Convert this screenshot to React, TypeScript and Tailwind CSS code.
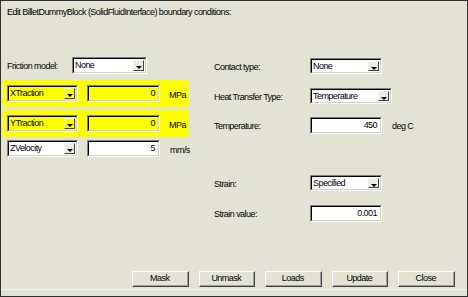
import React from "react";

const font = { fontFamily: '"Liberation Sans", Arial, sans-serif' };

function Arrow() {
  return (
    <div className="w-0 h-0 border-l-[3px] border-r-[3px] border-t-[3px] border-l-transparent border-r-transparent border-t-black mt-[4px]" />
  );
}

function Select({ value, w, yellow }: { value: string; w: string; yellow?: boolean }) {
  return (
    <div
      className={`${w} shrink-0 h-full flex border-t border-l border-t-[#808080] border-l-[#808080] border-b border-r border-b-white border-r-white`}
    >
      <div
        className={`flex-1 flex border-t border-l border-t-black border-l-black border-b border-r border-b-[#d4d0c8] border-r-[#d4d0c8] ${
          yellow ? "bg-[#ffff00]" : "bg-white"
        }`}
      >
        <div className="flex-1 flex items-center pl-[1px] leading-none">{value}</div>
        <div
          className={`w-[11px] my-[1px] mr-[1px] flex items-center justify-center border-t border-l border-t-[#f0f0f0] border-l-[#f0f0f0] border-b border-r border-b-[#404040] border-r-[#404040] ${
            yellow ? "bg-[#ffff00]" : "bg-[#ecebe6]"
          }`}
        >
          <Arrow />
        </div>
      </div>
    </div>
  );
}

function Field({ value, w, yellow }: { value: string; w: string; yellow?: boolean }) {
  return (
    <div
      className={`${w} shrink-0 h-full flex border-t border-l border-t-[#808080] border-l-[#808080] border-b border-r border-b-white border-r-white`}
    >
      <div
        className={`flex-1 flex items-center justify-end pr-[3px] leading-none border-t border-l border-t-black border-l-black border-b border-r border-b-[#d4d0c8] border-r-[#d4d0c8] ${
          yellow ? "bg-[#ffff00]" : "bg-white"
        }`}
      >
        {value}
      </div>
    </div>
  );
}

function Button({ label }: { label: string }) {
  return (
    <div className="w-[56.5px] shrink-0 h-[16px] flex border-t border-l border-t-white border-l-white border-b border-r border-b-[#404040] border-r-[#404040]">
      <div className="flex-1 flex items-center justify-center leading-none border-b border-r border-b-[#a0a0a0] border-r-[#a0a0a0]">
        {label}
      </div>
    </div>
  );
}

export default function App() {
  return (
    <div
      style={font}
      className="w-[468px] h-[297px] bg-[#e3e3d4] border border-[#303030] text-[9px] text-black tracking-[-0.55px] flex flex-col overflow-hidden"
    >
      <div className="h-[55px] pl-[6px] pt-[5px] leading-[12px]">
        Edit BilletDummyBlock (SolidFluidInterface) boundary conditions:
      </div>
      <div className="flex">
        {/* left column */}
        <div className="ml-[2px] w-[186px] shrink-0 flex flex-col">
          <div className="mt-[1px] h-[17px] flex items-center pl-[4px]">
            <div className="w-[65px] shrink-0 mt-[3px]">Friction model:</div>
            <Select value="None" w="w-[75px]" />
          </div>
          <div className="mt-[6px] h-[27px] bg-[#ffff00] flex items-center pl-[4px]">
            <div className="h-[17px] flex items-center">
              <Select value="XTraction" w="w-[71px]" yellow />
              <div className="ml-[9px] h-full shrink-0">
                <Field value="0" w="w-[73px]" yellow />
              </div>
              <div className="ml-[9px] mt-[4px] shrink-0">MPa</div>
            </div>
          </div>
          <div className="mt-[3px] h-[27px] bg-[#ffff00] flex items-center pl-[4px]">
            <div className="h-[17px] flex items-center">
              <Select value="YTraction" w="w-[71px]" yellow />
              <div className="ml-[9px] h-full shrink-0">
                <Field value="0" w="w-[73px]" yellow />
              </div>
              <div className="ml-[9px] mt-[4px] shrink-0">MPa</div>
            </div>
          </div>
          <div className="mt-[3px] h-[17px] flex items-center pl-[4px]">
            <Select value="ZVelocity" w="w-[71px]" />
            <div className="ml-[9px] h-full shrink-0">
              <Field value="5" w="w-[73px]" />
            </div>
            <div className="ml-[10px] mt-[4px] shrink-0">mm/s</div>
          </div>
        </div>
        {/* right column */}
        <div className="ml-[25px] flex flex-col">
          <div className="mt-[2px] h-[16px] flex items-center">
            <div className="w-[96px] shrink-0 mt-[3px]">Contact type:</div>
            <Select value="None" w="w-[72px]" />
          </div>
          <div className="mt-[14px] h-[16px] flex items-center">
            <div className="w-[96px] shrink-0 mt-[3px]">Heat Transfer Type:</div>
            <Select value="Temperature" w="w-[82px]" />
          </div>
          <div className="mt-[13px] h-[17px] flex items-center">
            <div className="w-[96px] shrink-0 mt-[3px]">Temperature:</div>
            <Field value="450" w="w-[72px]" />
            <div className="ml-[10px] mt-[2px] shrink-0">deg C</div>
          </div>
          <div className="mt-[41px] h-[16px] flex items-center">
            <div className="w-[96px] shrink-0 mt-[3px]">Strain:</div>
            <Select value="Specified" w="w-[72px]" />
          </div>
          <div className="mt-[14px] h-[17px] flex items-center">
            <div className="w-[96px] shrink-0 mt-[3px]">Strain value:</div>
            <Field value="0.001" w="w-[72px]" />
          </div>
        </div>
      </div>
      <div className="flex-1" />
      <div className="flex pl-[131px] gap-[10px]">
        <Button label="Mask" />
        <Button label="Unmask" />
        <Button label="Loads" />
        <Button label="Update" />
        <Button label="Close" />
      </div>
      <div className="mt-[2px] h-[1px] bg-[#f4f4ec]" />
      <div className="h-[6px]" />
    </div>
  );
}
